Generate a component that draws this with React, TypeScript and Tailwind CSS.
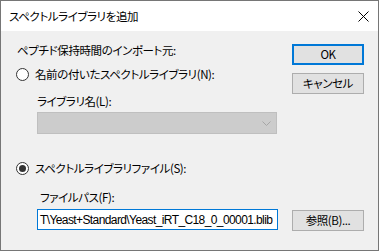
import React from "react";

const jp = "font-['Noto_Sans_CJK_JP',sans-serif] [font-feature-settings:'palt']";

function Radio({ checked }: { checked?: boolean }) {
  return (
    <span className="w-[13px] h-[13px] rounded-full border border-[#333333] bg-white flex items-center justify-center shrink-0">
      {checked && <span className="w-[7px] h-[7px] rounded-full bg-[#333333]" />}
    </span>
  );
}

function Button({ children, primary }: { children: React.ReactNode; primary?: boolean }) {
  return (
    <div
      className={
        "w-[72px] h-[21px] bg-[#e1e1e1] flex items-center justify-center text-[11.5px] tracking-[-0.4px] leading-none text-black " +
        (primary ? "border-2 border-[#0078d7]" : "border border-[#adadad]")
      }
    >
      {children}
    </div>
  );
}

export default function App() {
  return (
    <div className={"w-[379px] h-[251px] border border-[#767676] flex flex-col " + jp}>
      <div className="h-[30px] bg-white flex items-center justify-between pl-[8px] pr-[9px] shrink-0">
        <span className="text-[11.5px] tracking-[-0.4px] leading-[16px] text-black">スペクトルライブラリを追加</span>
        <svg width="11" height="11" viewBox="0 0 11 11" className="mt-[1px]">
          <path d="M0.5 0.5 L10.5 10.5 M10.5 0.5 L0.5 10.5" stroke="#000" strokeWidth="1" />
        </svg>
      </div>
      <div className="flex-1 bg-[#f0f0f0] pl-[15px] pr-[13px] flex flex-col text-[11.5px] tracking-[-0.4px] text-black">
        <div className="flex">
          <div className="w-[261px] flex flex-col">
            <div className="mt-[11px] pl-[1px] h-[16px] leading-[16px]">ペプチド保持時間のインポート元:</div>
            <div className="mt-[9px] h-[14px] flex items-center gap-[6px]">
              <Radio />
              <span className="leading-[16px]">名前の付いたスペクトルライブラリ(N):</span>
            </div>
            <div className="mt-[12px] pl-[21px] h-[16px] leading-[16px]">ライブラリ名(L):</div>
            <div className="mt-[3px] ml-[21px] w-[240px] h-[22px] bg-[#cccccc] border border-[#bfbfbf] flex items-center justify-end pr-[5px]">
              <svg width="9" height="5" viewBox="0 0 9 5">
                <path d="M0.5 0.5 L4.5 4.5 L8.5 0.5" stroke="#a6a6a6" strokeWidth="1" fill="none" />
              </svg>
            </div>
          </div>
          <div className="ml-[15px] flex flex-col">
            <div className="mt-[13px]">
              <Button primary>OK</Button>
            </div>
            <div className="mt-[8px]">
              <Button>キャンセル</Button>
            </div>
          </div>
        </div>
        <div className="mt-[27px] h-[14px] flex items-center gap-[6px]">
          <Radio checked />
          <span className="leading-[16px]">スペクトルライブラリファイル(S):</span>
        </div>
        <div className="mt-[14px] pl-[24px] h-[16px] leading-[16px]">ファイルパス(F):</div>
        <div className="mt-[4px] flex items-start">
          <div className="ml-[21px] w-[241px] h-[21px] bg-white border border-[#0078d7] flex items-center pl-[2px] overflow-hidden whitespace-nowrap font-['Liberation_Sans',sans-serif] text-[12px] tracking-[-0.6px]">
            T\Yeast+Standard\Yeast_iRT_C18_0_00001.blib
          </div>
          <div className="ml-[14px] mt-[1px]">
            <Button>参照(B)...</Button>
          </div>
        </div>
      </div>
    </div>
  );
}
